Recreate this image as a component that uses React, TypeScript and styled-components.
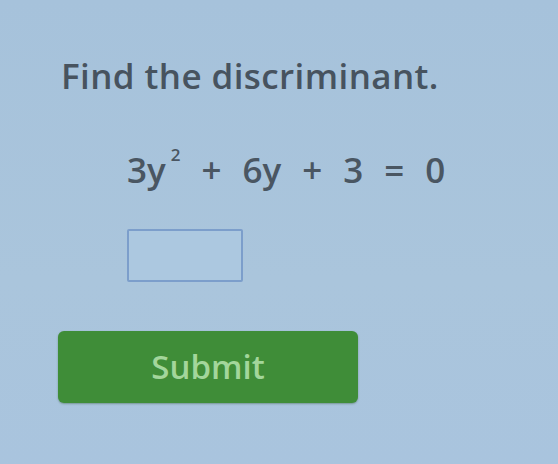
import React from 'react';
import styled, { createGlobalStyle } from 'styled-components';

const GlobalStyle = createGlobalStyle`
  html, body {
    margin: 0;
    padding: 0;
    background: #a8c3db;
  }
  body {
    font-family: "Open Sans", "DejaVu Sans", sans-serif;
  }
`;

const Page = styled.div`
  width: 558px;
  height: 464px;
  box-sizing: border-box;
  padding: 54px 0 0 61px;
  background: linear-gradient(180deg, #a6c2db 0%, #aac5dc 60%, #a9c4de 100%);
  display: flex;
  flex-direction: column;
  overflow: hidden;
`;

const Prompt = styled.div`
  font-size: 35px;
  font-weight: 600;
  color: #47535f;
  line-height: 44px;
  letter-spacing: 0.4px;
`;

const Equation = styled.div`
  margin: 46px 0 0 66px;
  font-size: 35px;
  font-weight: 600;
  color: #4a5662;
  line-height: 40px;
  display: flex;
  align-items: baseline;
  gap: 21px;
`;

const Sup = styled.sup`
  font-size: 17px;
  position: relative;
  top: -9px;
  margin-left: 5px;
`;

const AnswerBox = styled.input`
  margin: 39px 0 0 66px;
  width: 116px;
  height: 53px;
  box-sizing: border-box;
  border: 2px solid #7c9ecb;
  border-radius: 2px;
  background: #acc8e0;
  outline: none;
`;

const SubmitButton = styled.button`
  margin: 49px 0 0 -3px;
  width: 300px;
  height: 72px;
  border: none;
  border-radius: 6px;
  background: #3f8d38;
  color: #a3d69b;
  font-family: "Open Sans", "DejaVu Sans", sans-serif;
  font-size: 33px;
  font-weight: 600;
  padding: 0;
  box-shadow: 0 1px 2px rgba(40, 80, 40, 0.4);
`;

export default function App() {
  return (
    <>
      <GlobalStyle />
      <Page>
        <Prompt>Find the discriminant.</Prompt>
        <Equation>
          <span>3y<Sup>2</Sup></span>
          <span>+</span>
          <span>6y</span>
          <span>+</span>
          <span>3</span>
          <span>=</span>
          <span>0</span>
        </Equation>
        <div>
          <AnswerBox type="text" />
        </div>
        <div>
          <SubmitButton>Submit</SubmitButton>
        </div>
      </Page>
    </>
  );
}
